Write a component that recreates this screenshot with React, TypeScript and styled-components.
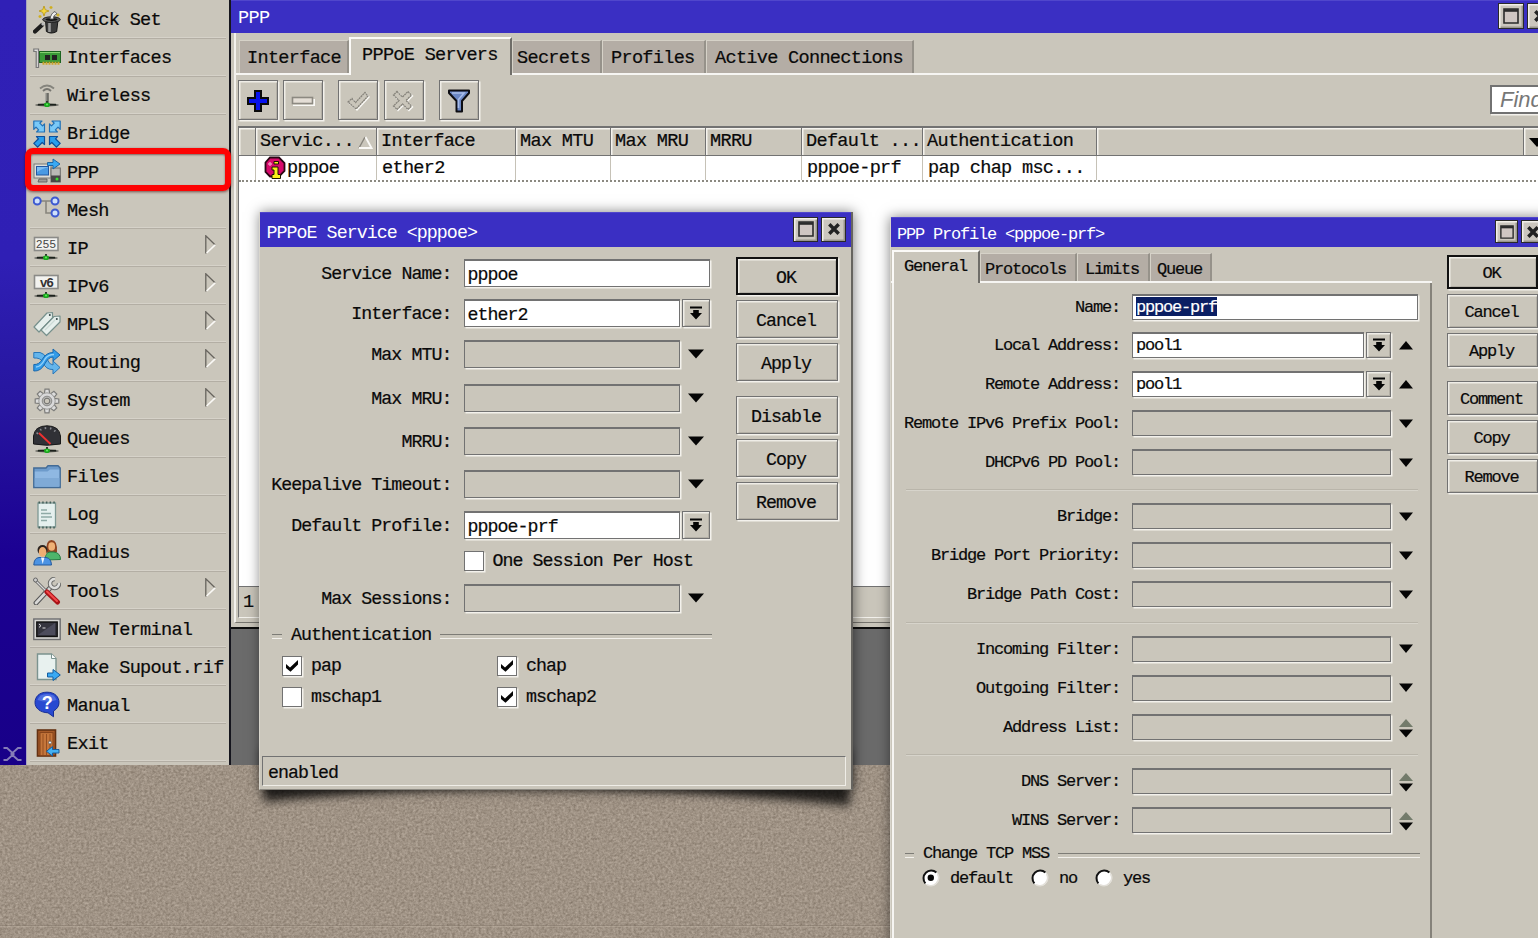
import React from "react";
import styled, { createGlobalStyle, css } from "styled-components";

const face = "#cac6bb";
const line = "#727272";
const accent = "#3a2fc3";

const GlobalStyle = createGlobalStyle`
  html, body { margin: 0; padding: 0; overflow: hidden; }
  * { box-sizing: border-box; }
`;

const Desktop = styled.div`
  position: relative;
  width: 1538px;
  height: 938px;
  overflow: hidden;
  background: #9f9385;
  color: #0a0a0a;
  font-family: "Liberation Mono", "DejaVu Sans Mono", monospace;
  font-size: 18.6px;
  letter-spacing: -0.72px;
  line-height: 24px;
  white-space: pre;
  -webkit-text-stroke: 0.2px currentColor;
`;

const Texture = styled.svg`
  position: absolute;
  inset: 0;
  width: 1538px;
  height: 938px;
`;

const AppFrame = styled.div`
  position: relative;
  display: flex;
  width: 1600px;
  height: 765px;
`;

const Strip = styled.div`
  width: 26px;
  flex: none;
  display: flex;
  align-items: flex-end;
  padding: 0 0 3px 3px;
  background: linear-gradient(#3020b6 0, #2f1fb5 260px, #26169f 400px, #1b0092 560px, #180088 100%);
`;

const Menu = styled.nav`
  width: 203px;
  flex: none;
  padding-top: 0.6px;
  background: ${face};
  border-left: 1px solid #a8a5c0;
  overflow: hidden;
`;

const MenuRow = styled.div`
  display: flex;
  align-items: center;
  height: 38.1px;
  margin: 0 3px;
  padding: 1px 0 0 3px;
  border-bottom: 1.5px solid #b3aea4;
  box-shadow: inset 0 -1px 0 #d6d2c9;
  & > svg { flex: none; }
  & > svg.sub { margin: -7px 10px 0 auto; }
`;

const MenuText = styled.span`
  margin: 3px 0 0 6px;
`;

const Client = styled.div`
  flex: 1;
  background: #6b6b6b;
  border-left: 2px solid #15151d;
`;

const Highlight = styled.div`
  position: absolute;
  left: 25px;
  top: 148px;
  width: 206px;
  height: 43px;
  border: 6px solid #fd0303;
  border-radius: 8px;
  box-shadow: 0 1px 3px rgba(60, 0, 0, 0.6), inset 0 1px 2px rgba(60, 0, 0, 0.5);
`;

/* ---------- windows ---------- */

const MainWindow = styled.section`
  height: 629px;
  display: flex;
  flex-direction: column;
  background: ${face};
  border-bottom: 2px solid #0d0d0d;
`;

const TitleBar = styled.header<{ $h: number; $pad: number; $btns: number }>`
  height: ${(p) => p.$h}px;
  flex: none;
  display: flex;
  align-items: center;
  color: #fff;
  background: ${accent};
  border-top: 1px solid #5046cc;
  padding: 0 ${(p) => p.$btns}px 0 ${(p) => p.$pad}px;
  -webkit-text-stroke: 0;
`;

const TitleText = styled.span<{ $y: number }>`
  flex: 1;
  padding-top: ${(p) => p.$y}px;
`;

const CaptionBtn = styled.span<{ $s: number }>`
  width: ${(p) => p.$s}px;
  height: ${(p) => p.$s}px;
  flex: none;
  margin: -2px 0 0 3px;
  display: flex;
  align-items: center;
  justify-content: center;
  background: #cbc6be;
  border: 1.5px solid #292929;
  box-shadow: inset 1.5px 1.5px 0 #f2efe9, inset -1.5px -1.5px 0 #99958c;
`;

const TabStrip = styled.div<{ $h: number; $x: number }>`
  display: flex;
  align-items: flex-end;
  flex: none;
  height: ${(p) => p.$h}px;
  padding-left: ${(p) => p.$x}px;
  box-shadow: inset 0 -2px 0 #f6f5f2;
`;

const Tab = styled.div<{ $w: number; $h: number; $on?: boolean; $pad: number; $y?: number }>`
  width: ${(p) => p.$w}px;
  height: ${(p) => p.$h}px;
  padding: ${(p) => p.$y ?? 6}px 0 0 ${(p) => p.$pad}px;
  margin-bottom: 2px;
  background: #b4ada5;
  border-top: 1.5px solid #d6d2c8;
  border-left: 1.5px solid #d6d2c8;
  border-right: 2px solid #96928a;
  ${(p) =>
    p.$on &&
    css`
      margin-bottom: 0;
      background: ${face};
      border-top: 2px solid #fbfaf7;
      border-left: 2px solid #fbfaf7;
      border-right: 2px solid #6f6d68;
    `}
`;

const bevel = css`
  border: 1.5px solid ${line};
  box-shadow: 1.5px 1.5px 0 #f3f1ec, inset 1.5px 1.5px 0 #efede7, inset -1px -1px 0 #b3afa5;
`;

const ToolBar = styled.div`
  display: flex;
  height: 51px;
  flex: none;
  padding: 5px 0 0 2px;
`;

const ToolBtn = styled.span<{ $gap?: number }>`
  width: 40px;
  height: 40px;
  flex: none;
  margin-right: ${(p) => p.$gap ?? 5}px;
  display: flex;
  align-items: center;
  justify-content: center;
  padding-top: 2px;
  ${bevel}
`;

const FindBox = styled.div`
  margin: 5px 0 0 1011px;
  width: 120px;
  height: 29px;
  padding: 1px 0 0 8px;
  background: #fff;
  border: 2px solid ${line};
  box-shadow: 1px 1.5px 0 #f3f1ec;
  color: #777;
  font: italic 22px/24px "Liberation Sans", Arial, sans-serif;
  letter-spacing: 0;
  -webkit-text-stroke: 0;
`;

const Table = styled.div`
  flex: 1;
  margin: 0 0 4px 2px;
  display: flex;
  flex-direction: column;
  background: #fff;
  border: 2px solid ${line};
  border-left-width: 1.5px;
  border-bottom: 1.5px solid #f3f1ec;
`;

const HeadRow = styled.div`
  display: flex;
  height: 28px;
  flex: none;
  background: ${face};
  border-bottom: 1.5px solid ${line};
`;

const HeadCell = styled.div<{ $w: number }>`
  width: ${(p) => p.$w}px;
  flex: none;
  display: flex;
  align-items: center;
  padding: 1px 0 0 4px;
  border-right: 1.5px solid ${line};
  box-shadow: inset 1.5px 1.5px 0 #f5f3ee;
  & > svg { margin: 1px 3px 0 auto; }
`;

const DataRow = styled.div`
  display: flex;
  height: 26px;
  flex: none;
  border-bottom: 2px dotted #8b8981;
`;

const Cell = styled.div<{ $w: number }>`
  width: ${(p) => p.$w}px;
  flex: none;
  display: flex;
  align-items: center;
  padding: 2px 0 0 5px;
  border-right: 1.5px solid #c6c2b7;
  & > svg { flex: none; margin: -2px 1px 0 3px; }
`;

const Footer = styled.div`
  margin-top: auto;
  height: 31px;
  background: ${face};
  border-top: 1.5px solid ${line};
  padding: 4px 0 0 4px;
`;

const MainBody = styled.div`
  flex: 1;
  display: flex;
  flex-direction: column;
  margin: 0 0 4px 3px;
  border-left: 2px solid #f3f1ec;
  border-bottom: 1.5px solid #77756f;
`;

const ServiceWindow = styled.section`
  position: absolute;
  left: 259px;
  top: 212px;
  width: 594px;
  height: 578px;
  display: flex;
  flex-direction: column;
  background: ${face};
  border-left: 1.5px solid #d9d6cd;
  border-right: 2px solid #66645f;
  border-bottom: 1px solid #8d8a82;
  box-shadow: 1px 0 12px rgba(0, 0, 0, 0.5);
  font-size: 18.3px;
  letter-spacing: -0.95px;
`;

const ShadowLayer = styled.svg`
  position: absolute;
  left: 240px;
  top: 740px;
  width: 660px;
  height: 110px;
`;

const Columns = styled.div`
  flex: 1;
  display: flex;
  min-height: 0;
`;

const ServiceForm = styled.div`
  width: 475px;
  padding-top: 12px;
`;

const Buttons = styled.div<{ $x: number; $y: number }>`
  padding: ${(p) => p.$y}px 0 0 ${(p) => p.$x}px;
`;

const Button = styled.div<{ $w: number; $h: number; $mt?: number; $main?: boolean }>`
  width: ${(p) => p.$w}px;
  height: ${(p) => p.$h}px;
  margin-top: ${(p) => p.$mt ?? 5}px;
  display: flex;
  align-items: center;
  justify-content: center;
  padding: 3px 2px 0 0;
  ${bevel}
  ${(p) => p.$main && css`border: 2px solid #111;`}
`;

const Field = styled.div<{ $mt: number; $h: number }>`
  display: flex;
  align-items: center;
  height: ${(p) => p.$h}px;
  margin-top: ${(p) => p.$mt}px;
`;

const Label = styled.span<{ $w: number }>`
  width: ${(p) => p.$w}px;
  flex: none;
  text-align: right;
  padding-top: 2px;
`;

const Input = styled.div<{ $w: number; $h: number; $off?: boolean }>`
  width: ${(p) => p.$w}px;
  height: ${(p) => p.$h}px;
  flex: none;
  margin-left: 12px;
  padding: ${(p) => (p.$h > 27 ? 2 : 0)}px 0 0 3px;
  background: ${(p) => (p.$off ? face : "#fff")};
  border: 1.5px solid ${line};
  border-top-width: 2px;
  box-shadow: 1.5px 1.5px 0 #f3f1ec;
`;

const Selected = styled.span`
  display: inline-block;
  height: 19px;
  line-height: 21px;
  margin-top: 1px;
  color: #fff;
  background: #0b1f63;
  vertical-align: top;
`;

const DropBtn = styled.span<{ $w: number; $h: number }>`
  width: ${(p) => p.$w}px;
  height: ${(p) => p.$h}px;
  flex: none;
  margin-left: 2px;
  display: flex;
  align-items: center;
  justify-content: center;
  ${bevel}
`;

const ArrowSlot = styled.span<{ $w: number }>`
  width: ${(p) => p.$w}px;
  flex: none;
  display: flex;
  justify-content: center;
  & > svg.pair { margin-top: 2px; }
`;

const Legend = styled.div<{ $mt: number; $x: number; $w: number; $lead: number }>`
  display: flex;
  align-items: center;
  height: 20px;
  margin: ${(p) => p.$mt}px 0 0 ${(p) => p.$x}px;
  width: ${(p) => p.$w}px;
  &::before, &::after {
    content: "";
    height: 3px;
    margin-top: 3px;
    border-top: 1.5px solid #7d7c76;
    border-bottom: 1.5px solid #f3f1ec;
  }
  &::before { width: ${(p) => p.$lead}px; margin-right: 9px; }
  &::after { flex: 1; margin-left: 9px; }
`;

const CheckGrid = styled.div`
  display: grid;
  grid-template-columns: 215px 200px;
  row-gap: 11px;
  margin: 11px 0 0 22px;
`;

const CheckItem = styled.div<{ $x?: number }>`
  display: flex;
  align-items: center;
  height: 20px;
  margin-left: ${(p) => p.$x ?? 0}px;
  gap: 9px;
`;

const Box = styled.span`
  width: 20px;
  height: 20px;
  flex: none;
  display: flex;
  align-items: center;
  justify-content: center;
  background: #fff;
  border: 1.5px solid ${line};
  box-shadow: 1.5px 1.5px 0 #f3f1ec;
`;

const StatusBar = styled.div`
  height: 30px;
  margin: 0 5px 3px 2px;
  padding: 4px 0 0 5px;
  border-top: 1.5px solid ${line};
  border-left: 1.5px solid ${line};
  border-right: 1.5px solid #efede7;
  border-bottom: 1.5px solid #efede7;
`;

const ProfileWindow = styled.section`
  position: absolute;
  left: 890px;
  top: 217px;
  width: 660px;
  height: 760px;
  background: ${face};
  border-left: 1.5px solid #d9d6cd;
  box-shadow: 0 0 12px rgba(0, 0, 0, 0.5);
  display: flex;
  flex-direction: column;
  font-size: 17px;
  letter-spacing: -1.2px;
`;

const ProfilePane = styled.div`
  width: 541px;
  padding-top: 3px;
  display: flex;
  flex-direction: column;
`;

const ProfileForm = styled.div`
  flex: 1;
  border-left: 2px solid #f6f5f2;
  border-right: 2px solid #85827a;
  margin-left: 1px;
  padding-top: 11px;
`;

const Rule = styled.div`
  height: 2px;
  margin: 14.25px 12px 0 12px;
  background: #b9b5aa;
  border-bottom: 0.5px solid #d7d4cb;
`;

const Radios = styled.div`
  display: flex;
  align-items: center;
  height: 22px;
  margin: 3px 0 0 27px;
`;

const RadioText = styled.span<{ $mr: number }>`
  margin: 2px ${(p) => p.$mr}px 0 9px;
`;

/* ---------- glyphs ---------- */

const Down = () => (
  <svg width="16" height="10" viewBox="0 0 16 10"><path d="M0 0.5H16L8 9.5Z" fill="#050505" /></svg>
);
const Up = () => (
  <svg width="14" height="9" viewBox="0 0 14 9"><path d="M0 8.5H14L7 0Z" fill="#050505" /></svg>
);
const DownSmall = () => (
  <svg width="14" height="9" viewBox="0 0 14 9"><path d="M0 0.5H14L7 9Z" fill="#050505" /></svg>
);
const UpDown = () => (
  <svg className="pair" width="14" height="20" viewBox="0 0 14 20">
    <path d="M0 9H14L7 1Z" fill="#737b6b" />
    <path d="M0 11.5H14L7 19.5Z" fill="#050505" />
  </svg>
);
const DropGlyph = () => (
  <svg width="14" height="15" viewBox="0 0 14 15">
    <path d="M1 1.5H13" stroke="#050505" strokeWidth="2" />
    <path d="M4.2 4H9.8V7H13L7 13.5L1 7H4.2Z" fill="#050505" />
  </svg>
);
const MaxGlyph = ({ s = 16 }: { s?: number }) => (
  <svg width={s} height={s} viewBox="0 0 16 16">
    <path d="M1 1H15V15H1Z" fill="#cfc6c2" stroke="#2b2b2b" strokeWidth="1.6" />
    <path d="M1 2.5H15" stroke="#2b2b2b" strokeWidth="2.6" />
  </svg>
);
const CloseGlyph = () => (
  <svg width="14" height="14" viewBox="0 0 14 14">
    <path d="M2.3 2.3L11.7 11.7M11.7 2.3L2.3 11.7" stroke="#222" strokeWidth="3.4" />
  </svg>
);
const Tick = () => (
  <svg width="14" height="14" viewBox="0 0 14 14">
    <path d="M1 5L5 8.5L13 1V5.5L5.5 12.8L1 9Z" fill="#050505" />
  </svg>
);
const Radio = ({ on }: { on?: boolean }) => (
  <svg width="20" height="20" viewBox="0 0 20 20">
    <circle cx="10" cy="10" r="8" fill="#fff" />
    <path d="M15.4 4.4A7.8 7.8 0 0 0 4.4 15.4" fill="none" stroke="#111" strokeWidth="2" />
    <path d="M16.6 6A7.8 7.8 0 0 1 6 16.6" fill="none" stroke="#e2dfd8" strokeWidth="1.6" />
    {on && <circle cx="9.8" cy="9.8" r="3.2" fill="#050505" />}
  </svg>
);
const SubArrow = () => (
  <svg className="sub" width="11" height="19" viewBox="0 0 11 19">
    <path d="M.8 18.5V.8L10 9.8" fill="none" stroke="#67645e" strokeWidth="1.3" />
    <path d="M1.6 18L10.2 9.8" stroke="#faf9f6" strokeWidth="1.6" />
  </svg>
);

const NetStand = () => (
  <>
    <path d="M14 19V22" stroke="#333" strokeWidth="2" />
    <ellipse cx="14" cy="23" rx="12" ry="1.5" fill="#5b5b55" />
    <path d="M5 22.6H23" stroke="#1c221c" strokeWidth="1.6" />
    <ellipse cx="14" cy="22.8" rx="3" ry="2.3" fill="#19a91d" />
    <circle cx="14" cy="22.4" r="1" fill="#67ea61" />
  </>
);

const icons: Record<string, React.ReactNode> = {
  wand: (
    <>
      <path d="M2 25.5L9 19" stroke="#1d1d1d" strokeWidth="4.2" strokeLinecap="round" />
      <path d="M9 19L11 17" stroke="#bbb" strokeWidth="3" />
      <path d="M12.5 14H25L23.7 25.5Q18 28.6 13.4 25.5Z" fill="#3b3b3b" stroke="#161616" />
      <path d="M16.5 17V26" stroke="#9b9b9b" strokeWidth="2.6" />
      <ellipse cx="18.5" cy="13.6" rx="8.8" ry="2.8" fill="#5b5b5b" stroke="#1e1e1e" strokeWidth="1" />
      <ellipse cx="18.5" cy="13.6" rx="6" ry="1.4" fill="#111" />
      <path d="M17 13Q18 7 22 5.5L24 8Q20 9 20.5 13Z" fill="#eee" stroke="#555" strokeWidth=".9" />
      <path d="M11 0L12.3 3.7L16 5L12.3 6.3L11 10L9.7 6.3L6 5L9.7 3.7Z" fill="#f5d83c" stroke="#b69413" strokeWidth=".8" />
      <path d="M7 9V12M5.5 10.5H8.5M18 0V3M16.5 1.5H19.5M25 7.5V10.5M23.5 9H26.5" stroke="#cfae1d" strokeWidth="1.3" />
    </>
  ),
  card: (
    <>
      <path d="M0.8 5H5.5V23.5H3.2V7.5H0.8Z" fill="#ddd" stroke="#777" strokeWidth="1.2" />
      <rect x="6.5" y="7.5" width="21" height="11" fill="#3a9a38" stroke="#1c6420" />
      <path d="M7 8.5H27" stroke="#85cf71" />
      <path d="M9.5 19.3H26.5" stroke="#caa52b" strokeWidth="3" strokeDasharray="2 1" />
      <rect x="12" y="11" width="5" height="5" fill="#222" /><rect x="19" y="11" width="5" height="5" fill="#222" />
    </>
  ),
  wireless: (
    <>
      <path d="M14 11V22" stroke="#8a8a84" strokeWidth="3" /><path d="M15 11V22" stroke="#4e4e4b" />
      <path d="M7 6.5Q14 0.5 21 6.5" fill="none" stroke="#85847d" strokeWidth="1.8" />
      <path d="M10 9Q14 5 18 9" fill="none" stroke="#777670" strokeWidth="1.8" />
      <NetStand />
    </>
  ),
  bridge: (
    <g strokeWidth="1.2" strokeLinejoin="round">
      <path d="M.8 1H9L6.8 3.2L9.5 5.9L11.5 4V12H3.6L5.6 9.8L3 7.1L.8 9.4Z" fill="#79c9f8" stroke="#2070b5" />
      <path d="M27.2 1H19L21.2 3.2L18.5 5.9L16.5 4V12H24.4L22.4 9.8L25 7.1L27.2 9.4Z" fill="#79c9f8" stroke="#2070b5" />
      <path d="M3.5 16.5H11.5V24.6L9.2 22.5L4.6 27.2L.8 23.4L5.5 18.8Z" fill="#2a9eed" stroke="#0e4f99" />
      <path d="M24.5 16.5H16.5V24.6L18.8 22.5L23.4 27.2L27.2 23.4L22.5 18.8Z" fill="#2a9eed" stroke="#0e4f99" />
    </g>
  ),
  ppp: (
    <>
      <rect x="1" y="6" width="17" height="14" fill="#deded8" stroke="#7b7b78" />
      <rect x="3.5" y="8.5" width="12" height="8.5" fill="#4a9ae3" stroke="#2458a0" />
      <path d="M4 14Q10 10 15 9.5V9H4Z" fill="#7fbdf0" />
      <path d="M6 21H14V24H5Z" fill="#9d9d98" stroke="#555" strokeWidth=".8" />
      <rect x="18" y="10" width="9.3" height="14" fill="#b9b9b5" stroke="#6a6a68" />
      <rect x="18" y="17.5" width="9.3" height="6.5" fill="#474747" /><circle cx="24" cy="21" r="1.5" fill="#3bdc31" />
      <path d="M14.5 4.5H20V1L27 6L20 11V7.5H14.5Z" fill="#39a9f3" stroke="#155d9f" strokeWidth=".9" />
    </>
  ),
  mesh: (
    <>
      <path d="M8 5H18M13 5V17H18" fill="none" stroke="#88857e" strokeWidth="1.6" />
      {[[4.2, 5], [22, 5], [22, 17]].map(([x, y]) => (
        <circle key={`${x}-${y}`} cx={x} cy={y} r="3.5" fill="#cfe0fb" stroke="#3d59d0" strokeWidth="2" />
      ))}
    </>
  ),
  ip: (
    <>
      <rect x="1.5" y="3.5" width="23.5" height="13" fill="#f2f2ef" stroke="#8b8b88" strokeWidth="1.6" />
      <text x="13.2" y="14" fontFamily="Liberation Sans, sans-serif" fontSize="11.5" letterSpacing=".4" textAnchor="middle" fill="#444">255</text>
      <g transform="translate(-1 1)"><NetStand /></g>
    </>
  ),
  ipv6: (
    <>
      <rect x="1.5" y="3.5" width="23.5" height="13" fill="#f2f2ef" stroke="#8b8b88" strokeWidth="1.6" />
      <text x="13.4" y="14.5" fontFamily="Liberation Sans, sans-serif" fontSize="13" fontWeight="bold" textAnchor="middle" fill="#333">v6</text>
      <g transform="translate(-1 1)"><NetStand /></g>
    </>
  ),
  mpls: (
    <g fill="#e6efec" stroke="#76908c" strokeWidth="1.2" strokeLinejoin="round">
      <path d="M1 17L14 3L19.5 2.5V8L6 22Z" />
      <path d="M8 20L21 6.5L27 6V12L13.5 25.5Z" />
      <path d="M12 20L22 10" stroke="#cddbd7" />
      <circle cx="23.8" cy="9" r="1" fill="#344" stroke="none" /><circle cx="16.8" cy="5" r="1" fill="#344" stroke="none" />
    </g>
  ),
  routing: (
    <g strokeLinejoin="round">
      <path d="M0.8 4.5H7Q11 5 14 11Q16.5 17 20 17V13L27 19.5L20 26V21.5Q13 22 9.5 14Q7.5 9.5 .8 10Z" fill="#64b5ec" stroke="#2877b9" />
      <path d="M0.8 23V16.5Q6 17 9.5 11Q13.5 4.5 20 4.5V1L27 7L20 13V9Q15.5 9 12 15.5Q8 23.5 .8 23Z" fill="#329be8" stroke="#1968ad" />
      <path d="M3 19Q8 19 12 11Q15 6.5 21 6.5" fill="none" stroke="#8fd0fb" strokeWidth="1.4" />
    </g>
  ),
  gear: (
    <>
      {[0, 45, 90, 135, 180, 225, 270, 315].map((a) => (
        <path key={a} d="M11.3 7L12 2.2H16L16.7 7Z" transform={`rotate(${a} 14 14)`} fill="#dcdcdc" stroke="#7c7c7a" strokeWidth="1.2" />
      ))}
      <circle cx="14" cy="14" r="8.2" fill="#d9d9da" stroke="#8b8b89" strokeWidth=".8" />
      <circle cx="14" cy="14" r="4.8" fill="#b6b6b4" stroke="#8a8a88" />
      <circle cx="14" cy="14" r="2.8" fill="#cac6bb" stroke="#6f6f6d" />
    </>
  ),
  gauge: (
    <>
      <path d="M.5 19V11Q2 .8 14 .8T27.5 11V19Q14 21.5 .5 19Z" fill="#303136" stroke="#191919" />
      <path d="M4 9Q7 3 14 3T24 9" fill="none" stroke="#8a8b90" strokeWidth="2" strokeDasharray="1.5 3.5" />
      <path d="M6 8L17.5 19" stroke="#ed3030" strokeWidth="1.8" />
      <g transform="translate(0 3)"><NetStand /></g>
    </>
  ),
  folder: (
    <>
      <path d="M.8 24.5V5H13L15 2.8H25L27.2 5V24.5Z" fill="#6d9bcb" stroke="#426b96" strokeWidth="1.4" />
      <path d="M1.8 8.5H14.5L17 6.5H26.3V23.5H1.8Z" fill="#8fb8e2" />
      <path d="M1.8 15H26.3V23.5H1.8Z" fill="#7faad6" />
    </>
  ),
  log: (
    <>
      <rect x="5" y="2" width="17.5" height="24" fill="#e5f0ee" stroke="#7e9994" strokeWidth="1.3" />
      <path d="M5.5 1.5H22.5M5.5 26.5H22.5" stroke="#425e59" strokeWidth="2" strokeDasharray="1.5 2.2" />
      <path d="M8 9H14M8 12.5H18M8 16H19M8 19.5H14" stroke="#8faaa6" strokeWidth="1.5" />
    </>
  ),
  people: (
    <>
      <path d="M13.5 13Q12.5 1 18.5 1T24 13L21 15H16Z" fill="#8f4320" />
      <ellipse cx="18.7" cy="7.5" rx="3.4" ry="4.3" fill="#efb176" />
      <path d="M12 21Q12 13.5 17 13H21Q27.5 14 27.5 20.5Z" fill="#4eb56b" stroke="#287b42" />
      <path d="M.8 26Q1 19 6 18.5H13Q18 19 18.5 26Z" fill="#4c93e3" stroke="#23599d" />
      <path d="M8 18.5L9.7 25L11.5 18.5Z" fill="#eef5ff" />
      <circle cx="9.5" cy="11" r="5" fill="#2a211c" /><ellipse cx="9.6" cy="13" rx="3.8" ry="5" fill="#eeae73" />
    </>
  ),
  tools: (
    <>
      <path d="M3 26L17 11" stroke="#555" strokeWidth="4.8" strokeLinecap="round" />
      <path d="M3 26L17 11" stroke="#d7d7d5" strokeWidth="2.8" strokeLinecap="round" />
      <path d="M26 6A4.5 4.5 0 1 1 22 2" fill="none" stroke="#6c6c6a" strokeWidth="4.5" />
      <path d="M26 6A4.5 4.5 0 1 1 22 2" fill="none" stroke="#dededc" strokeWidth="2.5" />
      <path d="M2 3L14 15" stroke="#666" strokeWidth="3" /><path d="M2 3L14 15" stroke="#d8d8d8" strokeWidth="1.2" />
      <circle cx="2.5" cy="3" r="2" fill="#ccc" stroke="#666" />
      <path d="M14 15L24.5 25" stroke="#a91317" strokeWidth="5" strokeLinecap="round" />
      <path d="M14 14.5L24 24" stroke="#f4494a" strokeWidth="2" strokeLinecap="round" />
    </>
  ),
  terminal: (
    <>
      <rect x=".8" y="4" width="26.4" height="20.5" fill="#d6d6d4" stroke="#6e6e70" strokeWidth="1.4" />
      <rect x="3.8" y="7" width="20.4" height="14.5" fill="#35353f" stroke="#111" strokeWidth="1.4" />
      <path d="M5 20L22 8V20Z" fill="#4c4c5c" /><path d="M6 9L8 10.7L6 12.4M9.5 13H12.5" fill="none" stroke="#ddd" />
    </>
  ),
  supout: (
    <>
      <path d="M4.5 1H18.5L23 5.5V26.5H4.5Z" fill="#e8f1ef" stroke="#7b938f" strokeWidth="1.4" />
      <path d="M18.5 1V5.5H23" fill="#fff" stroke="#7b938f" />
      <path d="M14.5 20H20V16.5L27.3 22L20 27.5V24H14.5Z" fill="#39a9f3" stroke="#155d9f" />
    </>
  ),
  help: (
    <>
      <path d="M14 1.2C6 1.2 2 6 2 11.5S7 21.5 15 21.8L20.5 25.8V20Q26 17 26 11.5C26 6 22 1.2 14 1.2Z" fill="#2849d1" stroke="#152c95" />
      <path d="M4.5 9Q6 3 14 3T23.5 9Q14 12 4.5 9Z" fill="#6c8aea" opacity=".6" />
      <text x="14" y="18" fontFamily="Liberation Sans, sans-serif" fontSize="18" fontWeight="bold" textAnchor="middle" fill="#fff">?</text>
    </>
  ),
  door: (
    <>
      <rect x="4.5" y="1" width="18" height="26" fill="#a65a28" stroke="#633112" strokeWidth="1.6" />
      <rect x="7" y="3.6" width="13" height="23" fill="#c5763b" stroke="#83431b" />
      <path d="M10 5V26M13.5 5V26M17 5V26" stroke="#954e20" />
      <circle cx="17" cy="13.5" r="1.5" fill="#eee" stroke="#555" strokeWidth=".7" />
      <path d="M26 20.5H19.5V17.5L13.5 22.3L19.5 27V24H26Z" fill="#43b1f3" stroke="#155d9f" />
    </>
  ),
};

const menu: { text: string; icon: string; sub?: boolean }[] = [
  { text: "Quick Set", icon: "wand" },
  { text: "Interfaces", icon: "card" },
  { text: "Wireless", icon: "wireless" },
  { text: "Bridge", icon: "bridge" },
  { text: "PPP", icon: "ppp" },
  { text: "Mesh", icon: "mesh" },
  { text: "IP", icon: "ip", sub: true },
  { text: "IPv6", icon: "ipv6", sub: true },
  { text: "MPLS", icon: "mpls", sub: true },
  { text: "Routing", icon: "routing", sub: true },
  { text: "System", icon: "gear", sub: true },
  { text: "Queues", icon: "gauge" },
  { text: "Files", icon: "folder" },
  { text: "Log", icon: "log" },
  { text: "Radius", icon: "people" },
  { text: "Tools", icon: "tools", sub: true },
  { text: "New Terminal", icon: "terminal" },
  { text: "Make Supout.rif", icon: "supout" },
  { text: "Manual", icon: "help" },
  { text: "Exit", icon: "door" },
];

const columns: [string, number, string][] = [
  ["", 17, ""],
  ["Servic...", 121, "pppoe"],
  ["Interface", 139, "ether2"],
  ["Max MTU", 95, ""],
  ["Max MRU", 95, ""],
  ["MRRU", 96, ""],
  ["Default ...", 121, "pppoe-prf"],
  ["Authentication", 174, "pap chap msc..."],
];

type Kind = "wide" | "combo" | "down" | "list" | "comboUp";

const serviceRows: [string, Kind, number, string?][] = [
  ["Service Name:", "wide", 0, "pppoe"],
  ["Interface:", "combo", 12, "ether2"],
  ["Max MTU:", "down", 13],
  ["Max MRU:", "down", 15],
  ["MRRU:", "down", 15],
  ["Keepalive Timeout:", "down", 15],
  ["Default Profile:", "combo", 13, "pppoe-prf"],
];

const profileRows: ([string, Kind, number, string?] | null)[] = [
  ["Name:", "wide", 0, "pppoe-prf"],
  ["Local Address:", "comboUp", 12, "pool1"],
  ["Remote Address:", "comboUp", 13, "pool1"],
  ["Remote IPv6 Prefix Pool:", "down", 13],
  ["DHCPv6 PD Pool:", "down", 13],
  null,
  ["Bridge:", "down", 12],
  ["Bridge Port Priority:", "down", 13],
  ["Bridge Path Cost:", "down", 13],
  null,
  ["Incoming Filter:", "down", 12],
  ["Outgoing Filter:", "down", 13],
  ["Address List:", "list", 13],
  null,
  ["DNS Server:", "list", 12],
  ["WINS Server:", "list", 13],
];

const ServiceField = ({ row }: { row: [string, Kind, number, string?] }) => {
  const [label, kind, mt, value] = row;
  return (
    <Field $mt={mt} $h={28.2}>
      <Label $w={191.5}>{label}</Label>
      <Input $w={kind === "wide" ? 246 : 216} $h={28} $off={kind === "down"}>{value}</Input>
      {kind === "combo" && <DropBtn $w={28} $h={28}><DropGlyph /></DropBtn>}
      {kind === "down" && <ArrowSlot $w={32}><Down /></ArrowSlot>}
    </Field>
  );
};

const profileWidths: Record<Kind, number> = { wide: 286, comboUp: 232, combo: 232, down: 259, list: 259 };

const ProfileField = ({ row }: { row: [string, Kind, number, string?] }) => {
  const [label, kind, mt, value] = row;
  return (
    <Field $mt={mt} $h={26}>
      <Label $w={226}>{label}</Label>
      <Input $w={profileWidths[kind]} $h={26} $off={kind === "down" || kind === "list"}>
        {kind === "wide" ? <Selected>{value}</Selected> : value}
      </Input>
      {kind === "comboUp" && <DropBtn $w={25} $h={26}><DropGlyph /></DropBtn>}
      {kind !== "wide" && (
        <ArrowSlot $w={29}>{kind === "comboUp" ? <Up /> : kind === "down" ? <DownSmall /> : <UpDown />}</ArrowSlot>
      )}
    </Field>
  );
};

const check = "M2 12L6 8.5L9.5 12.5L19 2.5L22 6L10 19Z";
const cross = "M5 1.5L10.5 7L16 1.5L19.5 5L14 10.5L19.5 16L16 19.5L10.5 14L5 19.5L1.5 16L7 10.5L1.5 5Z";

const Disabled = ({ d }: { d: string }) => (
  <svg width="24" height="22" viewBox="0 0 24 22">
    <path d={d} transform="translate(1 1)" fill="none" stroke="#faf9f6" strokeWidth="1.4" />
    <path d={d} fill="#cac6bb" stroke="#85827a" strokeWidth="1.3" strokeDasharray="2 .6" />
  </svg>
);

export default function App() {
  return (
    <>
      <GlobalStyle />
      <Desktop>
        <Texture>
          <filter id="grain" x="0" y="0" width="100%" height="100%" colorInterpolationFilters="sRGB">
            <feTurbulence type="fractalNoise" baseFrequency="0.38 0.42" numOctaves="3" seed="4" />
            <feColorMatrix values="0.24 0.08 0 0 0.464  0.24 0.08 0 0 0.414  0.24 0.08 0 0 0.36  0 0 0 0 1" />
          </filter>
          <rect y="765" width="1538" height="173" filter="url(#grain)" />
          <path d="M0 925.5H890" stroke="#7d7163" strokeOpacity=".4" />
          <path d="M0 926.5H890" stroke="#c0b3a4" strokeOpacity=".4" />
        </Texture>

        <AppFrame>
          <Strip>
            <svg width="19" height="16" viewBox="0 0 19 16">
              <path d="M.5 2H4L9.5 7L15 2H18.5M.5 14H4L9.5 9L15 14H18.5M7.5 8H11.5" fill="none" stroke="#857cb8" strokeWidth="1.8" />
            </svg>
          </Strip>
          <Menu>
            {menu.map((m) => (
              <MenuRow key={m.text}>
                <svg width="28" height="28" viewBox="0 0 28 28">{icons[m.icon]}</svg>
                <MenuText>{m.text}</MenuText>
                {m.sub && <SubArrow />}
              </MenuRow>
            ))}
          </Menu>
          <Client>
            <MainWindow>
              <TitleBar $h={33} $pad={7} $btns={57}>
                <TitleText $y={3}>PPP</TitleText>
                <CaptionBtn $s={26}><MaxGlyph /></CaptionBtn>
                <CaptionBtn $s={26}><CloseGlyph /></CaptionBtn>
              </TitleBar>
              <MainBody>
                <TabStrip $h={42} $x={3}>
                  <Tab $w={110} $h={33} $pad={7}>Interface</Tab>
                  <Tab $w={163} $h={38} $pad={11} $y={5} $on>PPPoE Servers</Tab>
                  <Tab $w={90} $h={33} $pad={4}>Secrets</Tab>
                  <Tab $w={104} $h={33} $pad={8}>Profiles</Tab>
                  <Tab $w={208} $h={33} $pad={8}>Active Connections</Tab>
                </TabStrip>
                <ToolBar>
                  <ToolBtn>
                    <svg width="22" height="22" viewBox="0 0 22 22"><path d="M8 1H14V8H21V14H14V21H8V14H1V8H8Z" fill="#0712ee" stroke="#0a0a0a" strokeWidth="2" /></svg>
                  </ToolBtn>
                  <ToolBtn $gap={15}>
                    <svg width="24" height="10" viewBox="0 0 24 10"><path d="M2 9.5H23V3" fill="none" stroke="#faf9f6" strokeWidth="2" /><rect x="1.5" y="1.5" width="20" height="6" fill="#e4ded6" stroke="#8c8981" strokeWidth="1.6" /></svg>
                  </ToolBtn>
                  <ToolBtn $gap={6}><Disabled d={check} /></ToolBtn>
                  <ToolBtn $gap={15}><Disabled d={cross} /></ToolBtn>
                  <ToolBtn $gap={0}>
                    <svg width="22" height="24" viewBox="0 0 22 24"><path d="M1 1.5H21V4L14 12V22.5H8.5V12L1 4Z" fill="#6b87c4" stroke="#0d0d12" strokeWidth="2" strokeLinejoin="round" /><path d="M4 4H16L10.5 10.5V19" fill="none" stroke="#a8bde8" strokeWidth="1.6" /></svg>
                  </ToolBtn>
                  <FindBox>Find</FindBox>
                </ToolBar>
                <Table>
                  <HeadRow>
                    {columns.map(([name, w], i) => (
                      <HeadCell key={i} $w={w}>
                        {name}
                        {i === 1 && (
                          <svg width="15" height="13" viewBox="0 0 15 13"><path d="M7 1L1 12" stroke="#86837b" strokeWidth="1.4" /><path d="M7.5 1L13.5 12H1" fill="none" stroke="#faf9f6" strokeWidth="1.8" /></svg>
                        )}
                      </HeadCell>
                    ))}
                    <HeadCell $w={427} />
                    <HeadCell $w={25}><svg width="16" height="9" viewBox="0 0 16 9"><path d="M0 0H16L8 9Z" /></svg></HeadCell>
                  </HeadRow>
                  <DataRow>
                    {columns.map(([, w, value], i) => (
                      <Cell key={i} $w={w}>
                        {i === 1 && (
                          <svg width="22" height="24" viewBox="0 0 22 24">
                            <path d="M6 1.5H15L20.5 7V15L15 20.5H6L1.5 16V6.5Z" fill="#d8096b" stroke="#2a0714" strokeWidth="1.8" />
                            <path d="M10 5.5H14.5V8H10ZM8 11H14V18.5H16.5V22.5H8V18.5H10V14H8Z" fill="#fbf11b" stroke="#1a1500" strokeWidth="1" />
                            <path d="M4 8H8M6 6V10" stroke="#f48bbd" strokeWidth="1.4" />
                          </svg>
                        )}
                        {value}
                      </Cell>
                    ))}
                  </DataRow>
                  <Footer>1</Footer>
                </Table>
              </MainBody>
            </MainWindow>
          </Client>
        </AppFrame>

        <Highlight />

        <ShadowLayer viewBox="0 0 660 110">
          <filter id="soft" x="-5%" y="-30%" width="110%" height="160%"><feGaussianBlur stdDeviation="5" /></filter>
          <path d="M22 10H610V66Q460 50 318 48T24 62Z" fill="#000" fillOpacity=".75" filter="url(#soft)" />
        </ShadowLayer>

        <ServiceWindow>
          <TitleBar $h={35} $pad={6.5} $btns={5}>
            <TitleText $y={5}>{"PPPoE Service <pppoe>"}</TitleText>
            <CaptionBtn $s={25}><MaxGlyph /></CaptionBtn>
            <CaptionBtn $s={25}><CloseGlyph /></CaptionBtn>
          </TitleBar>
          <Columns>
            <ServiceForm>
              {serviceRows.map((r) => <ServiceField key={r[0]} row={r} />)}
              <Field $mt={12} $h={20}>
                <CheckItem $x={203.5}><Box /><span>One Session Per Host</span></CheckItem>
              </Field>
              <ServiceField row={["Max Sessions:", "down", 13]} />
              <Legend $mt={12} $x={12} $w={440} $lead={10}>Authentication</Legend>
              <CheckGrid>
                <CheckItem><Box><Tick /></Box>pap</CheckItem>
                <CheckItem><Box><Tick /></Box>chap</CheckItem>
                <CheckItem><Box />mschap1</CheckItem>
                <CheckItem><Box><Tick /></Box>mschap2</CheckItem>
              </CheckGrid>
            </ServiceForm>
            <Buttons $x={1} $y={10}>
              <Button $w={102} $h={38} $mt={0} $main>OK</Button>
              <Button $w={102} $h={38}>Cancel</Button>
              <Button $w={102} $h={38}>Apply</Button>
              <Button $w={102} $h={38} $mt={15}>Disable</Button>
              <Button $w={102} $h={38}>Copy</Button>
              <Button $w={102} $h={38}>Remove</Button>
            </Buttons>
          </Columns>
          <StatusBar>enabled</StatusBar>
        </ServiceWindow>

        <ProfileWindow>
          <TitleBar $h={30} $pad={6} $btns={6}>
            <TitleText $y={4}>{"PPP Profile <pppoe-prf>"}</TitleText>
            <CaptionBtn $s={23}><MaxGlyph s={14} /></CaptionBtn>
            <CaptionBtn $s={23}><CloseGlyph /></CaptionBtn>
          </TitleBar>
          <Columns>
            <ProfilePane>
              <TabStrip $h={33} $x={1}>
                <Tab $w={88} $h={33} $pad={10} $y={3} $on>General</Tab>
                <Tab $w={97} $h={28} $pad={4} $y={4}>Protocols</Tab>
                <Tab $w={73} $h={28} $pad={7} $y={4}>Limits</Tab>
                <Tab $w={62} $h={28} $pad={6} $y={4}>Queue</Tab>
              </TabStrip>
              <ProfileForm>
                {profileRows.map((r, i) => (r ? <ProfileField key={i} row={r} /> : <Rule key={i} />))}
                <Legend $mt={11} $x={11} $w={515} $lead={9}>Change TCP MSS</Legend>
                <Radios>
                  <Radio on /><RadioText $mr={17}>default</RadioText>
                  <Radio /><RadioText $mr={17}>no</RadioText>
                  <Radio /><RadioText $mr={0}>yes</RadioText>
                </Radios>
              </ProfileForm>
            </ProfilePane>
            <Buttons $x={15} $y={8}>
              <Button $w={91} $h={34} $mt={0} $main>OK</Button>
              <Button $w={91} $h={34}>Cancel</Button>
              <Button $w={91} $h={34}>Apply</Button>
              <Button $w={91} $h={34} $mt={14}>Comment</Button>
              <Button $w={91} $h={34}>Copy</Button>
              <Button $w={91} $h={34}>Remove</Button>
            </Buttons>
          </Columns>
        </ProfileWindow>
      </Desktop>
    </>
  );
}
